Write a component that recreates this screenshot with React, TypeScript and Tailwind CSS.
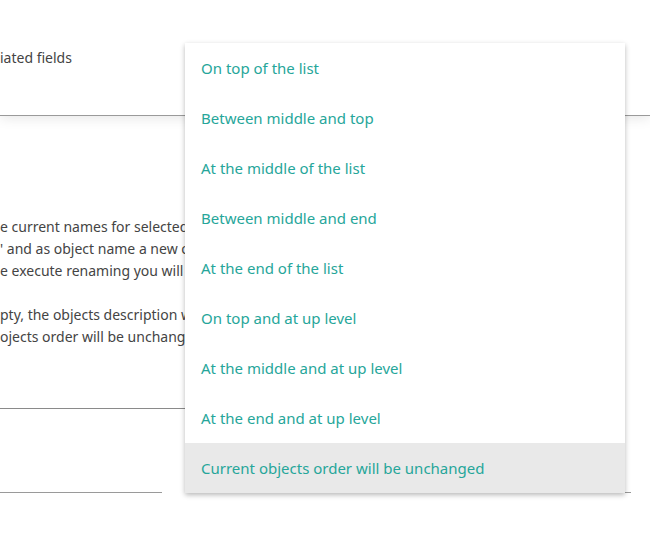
import React from 'react'

const options = [
  'On top of the list',
  'Between middle and top',
  'At the middle of the list',
  'Between middle and end',
  'At the end of the list',
  'On top and at up level',
  'At the middle and at up level',
  'At the end and at up level',
  'Current objects order will be unchanged',
]

export default function App() {
  const selected = options.length - 1

  return (
    <div
      className="relative w-[650px] h-[544px] overflow-hidden bg-white text-[#444]"
      style={{ fontFamily: '"Noto Sans", "Open Sans", sans-serif' }}
    >
      {/* header */}
      <div className="h-[116px] border-b border-[#9a9a9a] shadow-[0_2px_12px_rgba(0,0,0,0.10)] pt-[48px]">
        <p className="text-[14px] leading-5 whitespace-nowrap">iated fields</p>
      </div>

      {/* description, cut off where the menu covers it */}
      <div className="mt-[100px] w-[185px] overflow-hidden text-[14px] leading-[22px] whitespace-nowrap">
        <p>e current names for selected objects will be replaced</p>
        <p>' and as object name a new one will be generated</p>
        <p>e execute renaming you will see the result</p>
        <p className="mt-[22px]">pty, the objects description will be removed</p>
        <p>ojects order will be unchanged</p>
      </div>

      {/* fields */}
      <div className="mt-[60px] w-[600px] border-b border-[#8a8a8a]" />
      <div className="mt-[83px] flex items-end gap-[23px]">
        <div className="w-[162px] border-b border-[#9a9a9a]" />
        <div className="w-[446px] border-b border-[#9a9a9a]" />
      </div>

      {/* dropdown */}
      <ul className="absolute left-[185px] top-[43px] w-[440px] bg-white shadow-[0_2px_5px_rgba(0,0,0,0.28)]">
        {options.map((o, i) => (
          <li
            key={o}
            className={`h-[50px] flex items-center px-4 text-[15px] text-[#26a69a] ${
              i === selected ? 'bg-[#e9e9e9]' : ''
            }`}
          >
            {o}
          </li>
        ))}
      </ul>
    </div>
  )
}
